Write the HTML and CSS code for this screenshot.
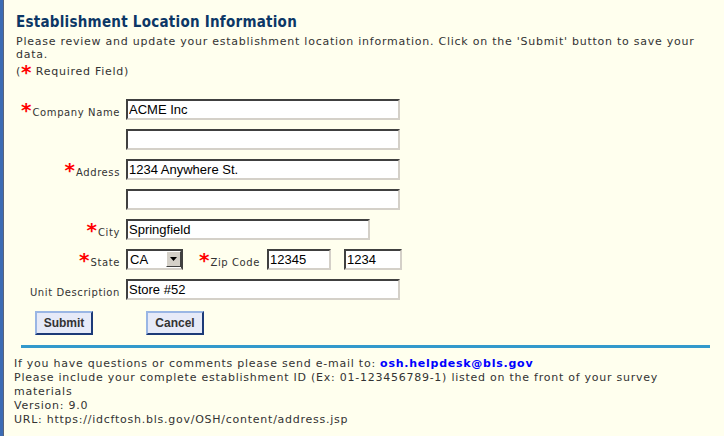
FILE: index.html
```html
<!DOCTYPE html>
<html lang="en">
<head>
<meta charset="utf-8">
<title>Establishment Location Information</title>
<link rel="stylesheet" href="styles.css">
</head>
<body>
<div class="frame">
  <h1 class="title">Establishment Location Information</h1>
  <p class="intro">Please review and update your establishment location information. Click on the 'Submit' button to save your data.</p>
  <p class="req-note">(<span class="star">*</span> Required Field)</p>

  <form class="form">
    <label class="lbl"><span class="star">*</span><span class="lbl-text">Company Name</span></label>
    <input class="field w-long" type="text" value="ACME Inc">

    <span class="lbl"></span>
    <input class="field w-long" type="text" value="">

    <label class="lbl"><span class="star">*</span><span class="lbl-text">Address</span></label>
    <input class="field w-long" type="text" value="1234 Anywhere St.">

    <span class="lbl"></span>
    <input class="field w-long" type="text" value="">

    <label class="lbl"><span class="star">*</span><span class="lbl-text">City</span></label>
    <input class="field w-city" type="text" value="Springfield">

    <label class="lbl"><span class="star">*</span><span class="lbl-text">State</span></label>
    <div class="inline">
      <span class="select-wrap">
        <select class="select"><option>CA</option></select>
        <span class="select-btn"><svg width="7" height="4" viewBox="0 0 7 4"><path d="M0 0H7L3.5 4Z" fill="#000"/></svg></span>
      </span>
      <span class="lbl zip-lbl"><span class="star">*</span><span class="lbl-text">Zip Code</span></span>
      <input class="field w-zip" type="text" value="12345">
      <input class="field w-ext" type="text" value="1234">
    </div>

    <label class="lbl"><span class="lbl-text">Unit Description</span></label>
    <input class="field w-long" type="text" value="Store #52">
  </form>

  <div class="buttons">
    <button class="btn" type="button">Submit</button>
    <button class="btn" type="button">Cancel</button>
  </div>

  <hr class="rule">

  <div class="footer">
    <div>If you have questions or comments please send e-mail to: <a class="mail" href="#">osh.helpdesk@bls.gov</a></div>
    <div>Please include your complete establishment ID (Ex: 01-123456789-1) listed on the front of your survey materials</div>
    <div>Version: 9.0</div>
    <div>URL: https://idcftosh.bls.gov/OSH/content/address.jsp</div>
  </div>
</div>
</body>
</html>
```

FILE: styles.css
```css
html, body {
  margin: 0;
  padding: 0;
  background: #ffffee;
}
body {
  font-family: "DejaVu Sans", Verdana, sans-serif;
  font-size: 11px;
  letter-spacing: 0.75px;
  color: #333333;
}
.frame {
  min-height: 436px;
  box-sizing: border-box;
  border-left: 3px solid #3c6cb4;
  box-shadow: inset 1px 0 0 #5a6478;
  padding: 11px 10px 0 13px;
}
.title {
  margin: 0;
  font-family: "DejaVu Sans Condensed", "DejaVu Sans", sans-serif;
  font-stretch: condensed;
  font-weight: bold;
  font-size: 15px;
  letter-spacing: 0.25px;
  line-height: 22px;
  color: #0c3766;
}
.intro {
  margin: 2px 0 0;
  line-height: 13px;
}
.req-note {
  margin: 4px 0 0;
  line-height: 14px;
}
.star {
  color: #ff0000;
  font-family: "DejaVu Sans", sans-serif;
  font-weight: bold;
  font-size: 20px;
  letter-spacing: 0;
  line-height: 14px;
  vertical-align: top;
}
.form {
  display: grid;
  grid-template-columns: 104px auto;
  column-gap: 6px;
  row-gap: 9px;
  margin-top: 20px;
  justify-items: start;
}
.lbl {
  justify-self: end;
  display: flex;
  align-items: flex-end;
  height: 21px;
}
.lbl .star {
  align-self: flex-start;
  margin-top: 4px;
  margin-right: 1px;
}
.lbl-text {
  font-size: 10px;
  letter-spacing: 0.6px;
  line-height: 12px;
  margin-bottom: 1px;
}
.field {
  box-sizing: border-box;
  height: 21px;
  margin: 0;
  padding: 0 1px;
  border: 2px solid;
  border-color: #404040 #d4d0c8 #d4d0c8 #404040;
  background: #ffffff;
  font-family: "Liberation Sans", Arial, sans-serif;
  font-size: 13px;
  letter-spacing: 0;
  color: #000000;
}
.w-long { width: 274px; }
.w-city { width: 244px; }
.w-zip { width: 64px; }
.w-ext { width: 58px; margin-left: 13px; }
.inline {
  display: flex;
  align-items: flex-start;
}
.select-wrap {
  position: relative;
  display: block;
  width: 57px;
  height: 21px;
}
.select {
  appearance: none;
  -webkit-appearance: none;
  box-sizing: border-box;
  width: 57px;
  height: 21px;
  margin: 0;
  padding: 0 0 0 2px;
  border: 2px solid;
  border-color: #404040 #404040 #d4d0c8 #404040;
  background: #ffffff;
  font-family: "Liberation Sans", Arial, sans-serif;
  font-size: 13px;
  color: #000;
  border-radius: 0;
}
.select-btn {
  position: absolute;
  top: 2px;
  right: 2px;
  width: 15px;
  height: 16px;
  box-sizing: border-box;
  background: #d4d0c8;
  border: 1px solid;
  border-color: #ffffff #404040 #404040 #ffffff;
  display: flex;
  align-items: center;
  justify-content: center;
}
.zip-lbl {
  margin-left: 16px;
  margin-right: 7px;
}
.buttons {
  display: flex;
  gap: 53px;
  margin: 11px 0 0 19px;
}
.btn {
  box-sizing: border-box;
  width: 58px;
  height: 24px;
  margin: 0;
  padding: 0;
  background: #e6eaf8;
  border: 2px solid;
  border-color: #9ab6e4 #1c3a78 #1c3a78 #9ab6e4;
  font-family: "Liberation Sans", Arial, sans-serif;
  font-weight: bold;
  font-size: 12px;
  letter-spacing: 0;
  color: #333333;
}
.rule {
  height: 3px;
  border: 0;
  margin: 10px 4px 0 5px;
  background: #3399cc;
}
.footer {
  margin: 9px 0 0 -2px;
  line-height: 14px;
}
.mail {
  color: #0000ff;
  font-weight: bold;
  text-decoration: none;
}
```
